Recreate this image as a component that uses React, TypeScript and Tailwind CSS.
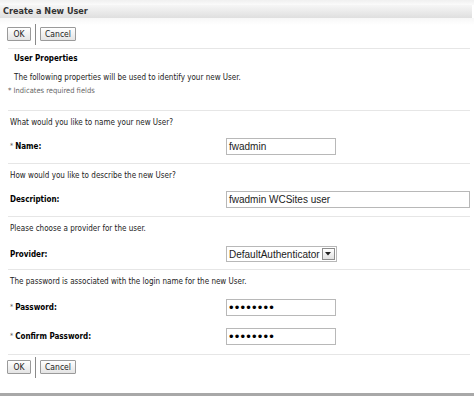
import React from "react";

const font = { fontFamily: '"DejaVu Sans Condensed", "DejaVu Sans", Tahoma, sans-serif' };

function Btn({ children, w }: { children: React.ReactNode; w: string }) {
  return (
    <div
      className={`${w} h-[14px] border border-[#9a9a9a] bg-gradient-to-b from-[#ffffff] to-[#e4e4e4] flex items-center justify-center text-[8.5px] text-[#222] rounded-[1px]`}
    >
      {children}
    </div>
  );
}

function Toolbar() {
  return (
    <div className="h-[14px] flex items-center pl-[7px]">
      <Btn w="w-[24px]">OK</Btn>
      <div className="w-px h-[21px] shrink-0 bg-[#8a8a8a] ml-[4px] mr-[4px]" />
      <Btn w="w-[36px]">Cancel</Btn>
    </div>
  );
}

function Line() {
  return <div className="ml-[8px] mr-[4px] h-px bg-[#e6e6e6]" />;
}

function Input({ value, w, pw }: { value: string; w: string; pw?: boolean }) {
  return (
    <div
      className={`${w} h-[17px] border border-[#b8b8b8] bg-white flex items-center pl-[2px] ${pw ? "text-[13px] tracking-[1.2px] text-black" : "text-[10px] text-[#222]"}`}
      style={{ fontFamily: '"Liberation Sans", Arial, sans-serif' }}
    >
      {value}
    </div>
  );
}

function Question({ children, h = "h-[23px]" }: { children: React.ReactNode; h?: string }) {
  return <div className={`${h} flex items-center pl-[10px] text-[8px] text-[#222]`}>{children}</div>;
}

function FieldRow({ label, req, children, pt = "pt-[4px]", h = "h-[29px]" }: { label: string; req?: boolean; children: React.ReactNode; pt?: string; h?: string }) {
  return (
    <div className={`${h} ${pt} flex items-start`}>
      <div className="w-[226px] h-[17px] flex items-center pl-[10px] text-[8px] font-bold text-black">
        {req && <span className="font-normal text-[#555] mr-[2px] text-[7px] self-start mt-[3px]">*</span>}
        {label}
      </div>
      {children}
    </div>
  );
}

export default function App() {
  return (
    <div className="w-[474px] h-[396px] bg-white overflow-hidden flex flex-col" style={font}>
      <div className="h-[5px] bg-gradient-to-b from-[#f0f0f0] to-[#fbfbfb]" />
      <div className="h-[13px] mr-[2px] bg-gradient-to-b from-[#f6f6f6] to-[#dfdfdf] flex items-center pl-[3px] text-[9px] font-bold text-[#333]">
        Create a New User
      </div>
      <div className="h-[7px] bg-gradient-to-b from-[#f7f7f7] to-white" />
      <div className="h-[23px] pt-[2px]">
        <Toolbar />
      </div>
      <Line />
      <div className="h-[20px] flex items-center pl-[14px] text-[8px] font-bold text-black">User Properties</div>
      <div className="h-[17px] flex items-center pl-[14px] text-[8px] text-[#222]">
        The following properties will be used to identify your new User.
      </div>
      <div className="h-[10px] flex items-center pl-[8px] text-[7.5px] text-[#666]">* Indicates required fields</div>
      <div className="h-[14px]" />
      <Line />
      <Question>What would you like to name your new User?</Question>
      <FieldRow label="Name:" req>
        <Input value="fwadmin" w="w-[110px]" />
      </FieldRow>
      <Line />
      <Question>How would you like to describe the new User?</Question>
      <FieldRow label="Description:">
        <Input value="fwadmin WCSites user" w="w-[244px]" />
      </FieldRow>
      <Line />
      <Question>Please choose a provider for the user.</Question>
      <FieldRow label="Provider:" pt="pt-[6px]">
        <div
          className="h-[16px] border border-[#b8b8b8] bg-white flex items-center pl-[2px] text-[10px] text-[#222]"
          style={{ fontFamily: '"Liberation Sans", Arial, sans-serif' }}
        >
          DefaultAuthenticator
          <div className="ml-[2px] mr-[1px] w-[13px] h-[12px] border border-[#8d8d8d] bg-gradient-to-b from-white to-[#e2e2e2] flex items-center justify-center">
            <svg width="6" height="4" viewBox="0 0 6 4">
              <path d="M0 0 L6 0 L3 3.5 Z" fill="#222" />
            </svg>
          </div>
        </div>
      </FieldRow>
      <Line />
      <Question h="h-[24px]">The password is associated with the login name for the new User.</Question>
      <FieldRow label="Password:" req pt="pt-[5px]" h="h-[29px]">
        <Input value="••••••••" w="w-[110px]" pw />
      </FieldRow>
      <FieldRow label="Confirm Password:" req pt="pt-[5px]" h="h-[31px]">
        <Input value="••••••••" w="w-[110px]" pw />
      </FieldRow>
      <Line />
      <div className="h-[27px] pt-[5px]">
        <Toolbar />
      </div>
      <div className="flex-1" />
      <div className="h-[3px] bg-[#a8a8a8]" />
    </div>
  );
}
